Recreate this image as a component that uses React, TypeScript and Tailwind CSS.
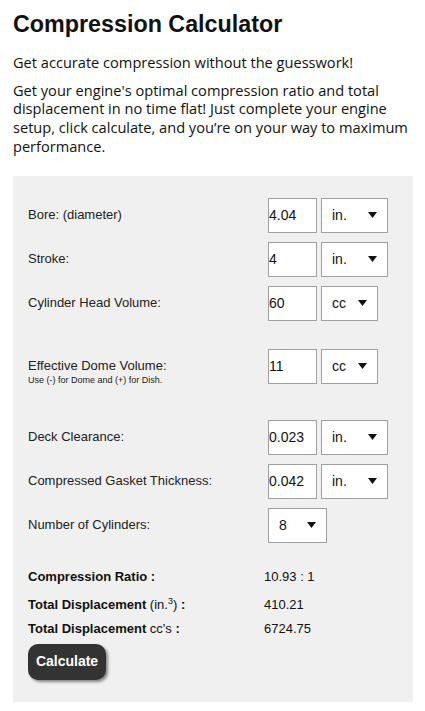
import React from "react";

function Arrow() {
  return (
    <svg width="9" height="6" viewBox="0 0 9 6" className="shrink-0">
      <path d="M0 0 L9 0 L4.5 6 Z" fill="#111" />
    </svg>
  );
}

function Sel({ text, w }: { text: string; w: string }) {
  return (
    <div
      className={`${w} h-[35px] border border-[#a0a0a0] bg-white flex items-center justify-between pl-[10px] pr-[10px] text-[14px] text-[#111]`}
    >
      <span>{text}</span>
      <Arrow />
    </div>
  );
}

function Inp({ v }: { v: string }) {
  return (
    <input
      defaultValue={v}
      className="w-[49px] h-[35px] border border-[#a0a0a0] bg-white px-0 text-[14px] text-[#111] outline-none"
      style={{ fontFamily: "'Liberation Sans', Arial, sans-serif" }}
    />
  );
}

function Row({
  label,
  v,
  unit,
  w,
  cls,
}: {
  label: string;
  v: string;
  unit: string;
  w: string;
  cls?: string;
}) {
  return (
    <div className={`flex items-center h-[35px] ${cls ?? ""}`}>
      <div className="w-[240px] text-[13px] text-[#222]">{label}</div>
      <Inp v={v} />
      <div className="w-[4px]" />
      <Sel text={unit} w={w} />
    </div>
  );
}

export default function App() {
  return (
    <div
      className="bg-white w-[425px] min-h-[711px] px-[13px] pt-[9px] text-[#111]"
      style={{ fontFamily: "'Liberation Sans', Arial, sans-serif" }}
    >
      <h1 className="text-[23.3px] font-bold leading-[30px] text-[#111]">Compression Calculator</h1>
      <div style={{ fontFamily: "'Open Sans', sans-serif" }} className="text-[14.6px] leading-[18.7px] text-[#111]">
        <p className="mt-[14px]">Get accurate compression without the guesswork!</p>
        <p className="mt-[9px]">
          Get your engine's optimal compression ratio and total displacement in no time flat! Just complete your
          engine setup, click calculate, and you’re on your way to maximum performance.
        </p>
      </div>

      <div className="mt-[20px] w-[400px] bg-[#f0f0f0] pl-[15px] pt-[22px] pb-[22px]">
        <Row label="Bore: (diameter)" v="4.04" unit="in." w="w-[67px]" />
        <Row label="Stroke:" v="4" unit="in." w="w-[67px]" cls="mt-[9px]" />
        <Row label="Cylinder Head Volume:" v="60" unit="cc" w="w-[57px]" cls="mt-[9px]" />

        <div className="flex items-start h-[35px] mt-[28px]">
          <div className="w-[240px] pt-[9px]">
            <div className="text-[13px] leading-[16px] text-[#222]">Effective Dome Volume:</div>
            <div className="text-[9px] leading-[12px] text-[#222]">Use (-) for Dome and (+) for Dish.</div>
          </div>
          <Inp v="11" />
          <div className="w-[4px]" />
          <Sel text="cc" w="w-[57px]" />
        </div>

        <Row label="Deck Clearance:" v="0.023" unit="in." w="w-[67px]" cls="mt-[36px]" />
        <Row label="Compressed Gasket Thickness:" v="0.042" unit="in." w="w-[67px]" cls="mt-[9px]" />

        <div className="flex items-center h-[35px] mt-[9px]">
          <div className="w-[240px] text-[13px] text-[#222]">Number of Cylinders:</div>
          <Sel text="8" w="w-[59px]" />
        </div>

        <div className="mt-[26px] text-[13px] text-[#111]">
          <div className="flex items-center h-[16px]">
            <div className="w-[236px] font-bold">Compression Ratio :</div>
            <div>10.93 : 1</div>
          </div>
          <div className="flex items-center h-[16px] mt-[12px]">
            <div className="w-[236px]">
              <span className="font-bold">Total Displacement </span>
              <span>
                (in.<sup className="text-[9px]">3</sup>)
              </span>
              <span className="font-bold"> :</span>
            </div>
            <div>410.21</div>
          </div>
          <div className="flex items-center h-[16px] mt-[8px]">
            <div className="w-[236px]">
              <span className="font-bold">Total Displacement </span>
              <span>cc's</span>
              <span className="font-bold"> :</span>
            </div>
            <div>6724.75</div>
          </div>
        </div>

        <button className="mt-[7px] w-[78px] h-[36px] rounded-[10px] bg-[#333] text-white font-bold text-[14px] shadow-[2px_2px_3px_rgba(0,0,0,0.45)]">
          Calculate
        </button>
      </div>
    </div>
  );
}
